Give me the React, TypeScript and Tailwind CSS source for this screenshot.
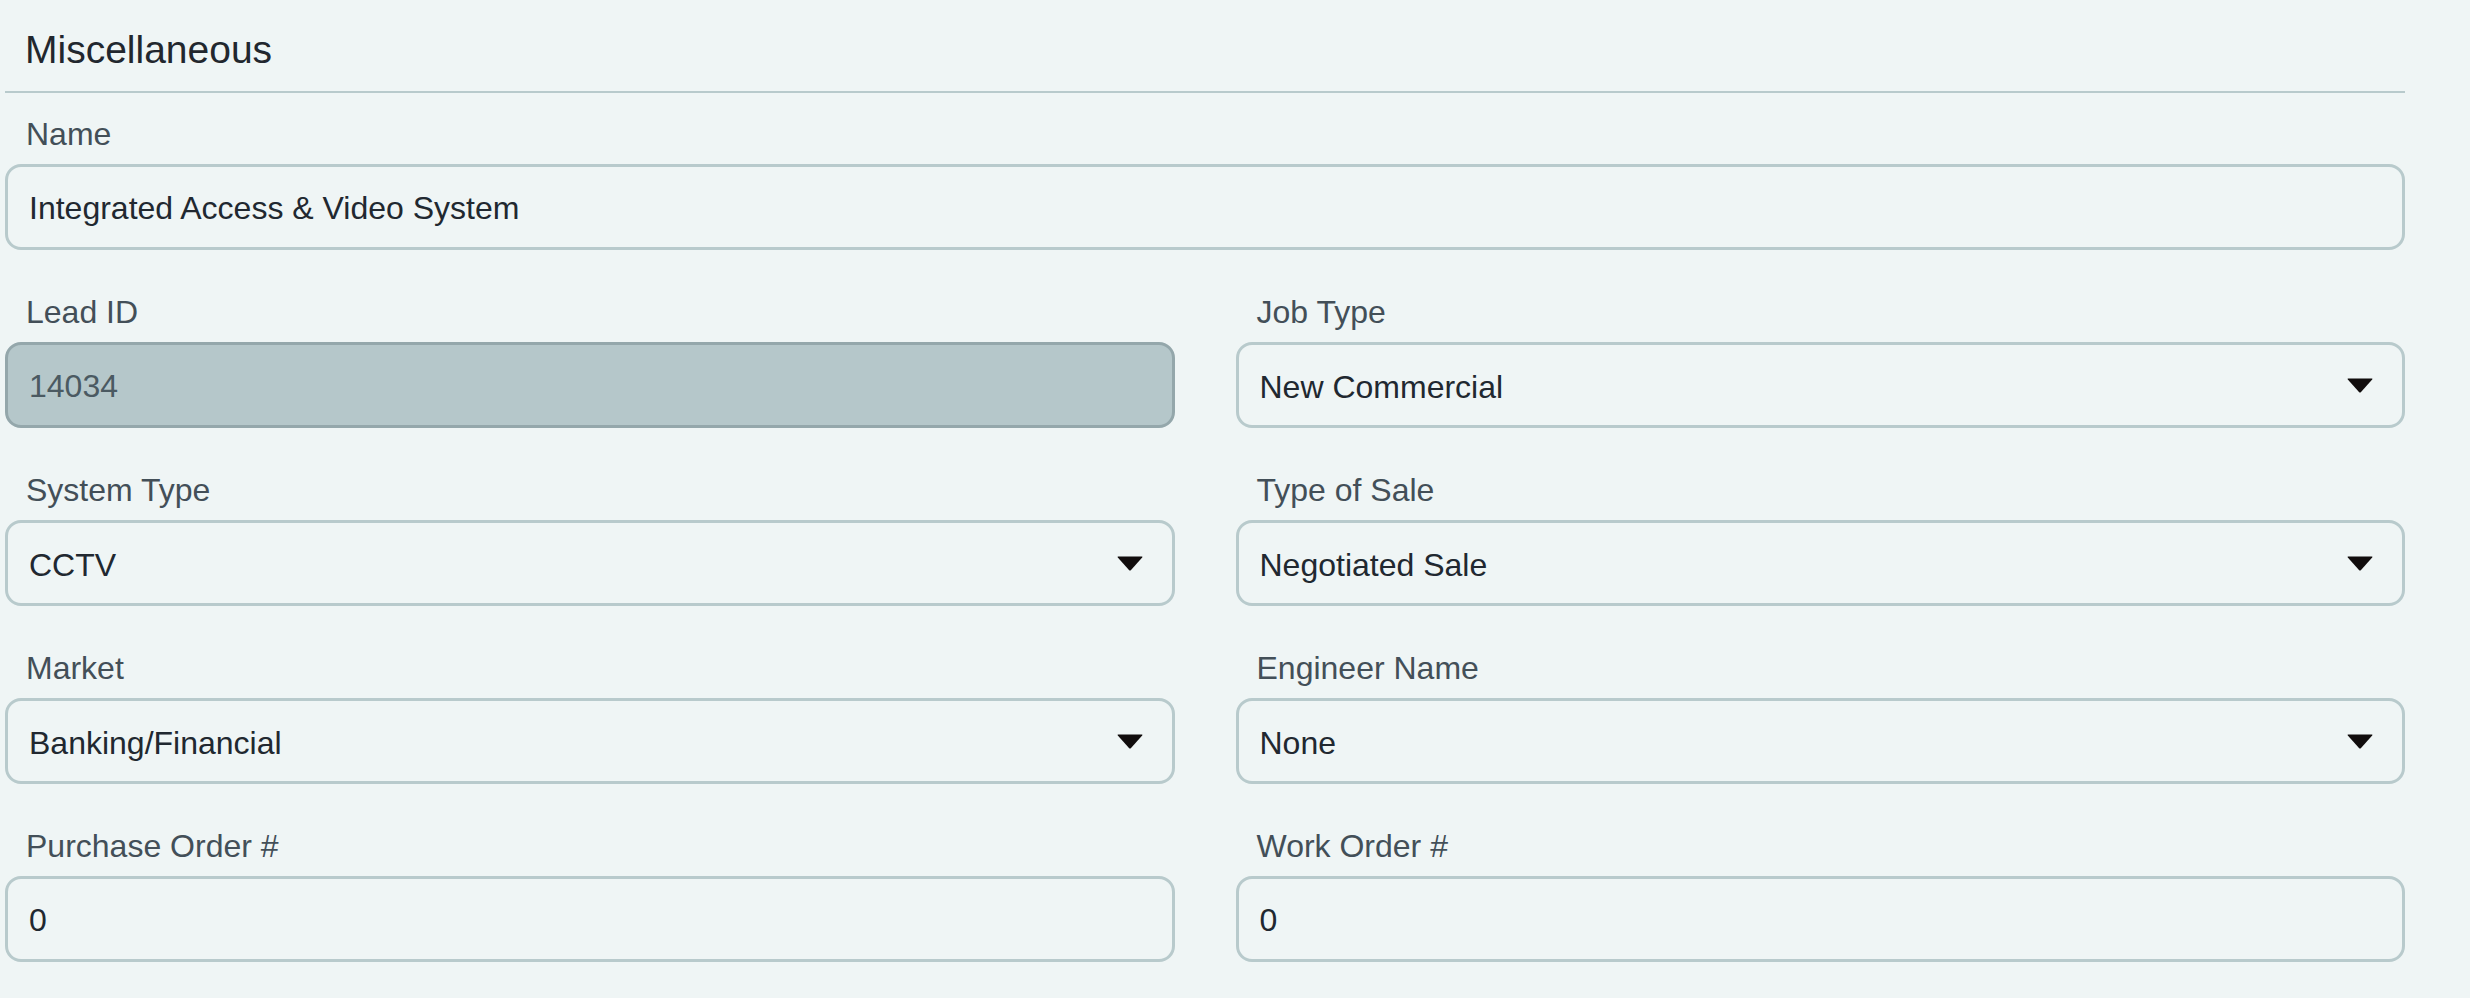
import React from 'react';

const font = { fontFamily: '"Liberation Sans", Arial, sans-serif' };

function Caret() {
  return (
    <svg width="26" height="15" viewBox="0 0 26 15" className="shrink-0">
      <path
        d="M1.2 0.6 H24.8 Q26 0.6 25.2 1.6 L13.8 14.2 Q13 15 12.2 14.2 L0.8 1.6 Q0 0.6 1.2 0.6 Z"
        fill="#110d0d"
      />
    </svg>
  );
}

function Field({ label, children, wide }: { label: string; children: React.ReactNode; wide?: boolean }) {
  return (
    <div className={wide ? 'col-span-2 flex flex-col' : 'flex flex-col'}>
      <label className="mb-[6px] pl-[21px] text-[32px] leading-[48px] text-[#434f58]">{label}</label>
      {children}
    </div>
  );
}

function TextInput({ value, disabled }: { value: string; disabled?: boolean }) {
  return (
    <input
      readOnly
      value={value}
      className={
        disabled
          ? 'h-[86px] w-full rounded-[16px] border-[3px] border-[#94a7ab] bg-[#b5c7ca] pl-[21px] pt-[2px] text-[32px] text-[#4b5a62] outline-none'
          : 'h-[86px] w-full rounded-[16px] border-[3px] border-[#b8cacc] bg-transparent pl-[21px] pt-[2px] text-[32px] text-[#212830] outline-none'
      }
      style={font}
    />
  );
}

function Select({ value }: { value: string }) {
  return (
    <div className="flex h-[86px] w-full items-center justify-between rounded-[16px] border-[3px] border-[#b8cacc] pl-[21px] pr-[29px] text-[32px] text-[#212830]">
      <span className="pt-[3px]">{value}</span>
      <Caret />
    </div>
  );
}

export default function App() {
  return (
    <div className="min-h-screen w-full bg-[#eff5f5]" style={font}>
      <div className="ml-[5px] w-[2400px]">
        <div className="border-b-2 border-[#b8cacc] pt-[26px] pb-[17px]">
          <h2 className="pl-[20px] text-[39px] leading-[48px] text-[#22272e]">Miscellaneous</h2>
        </div>
        <div className="mt-[17px] grid grid-cols-2 gap-x-[61px] gap-y-[38px]">
          <Field label="Name" wide>
            <TextInput value="Integrated Access & Video System" />
          </Field>
          <Field label="Lead ID">
            <TextInput value="14034" disabled />
          </Field>
          <Field label="Job Type">
            <Select value="New Commercial" />
          </Field>
          <Field label="System Type">
            <Select value="CCTV" />
          </Field>
          <Field label="Type of Sale">
            <Select value="Negotiated Sale" />
          </Field>
          <Field label="Market">
            <Select value="Banking/Financial" />
          </Field>
          <Field label="Engineer Name">
            <Select value="None" />
          </Field>
          <Field label="Purchase Order #">
            <TextInput value="0" />
          </Field>
          <Field label="Work Order #">
            <TextInput value="0" />
          </Field>
        </div>
      </div>
    </div>
  );
}
